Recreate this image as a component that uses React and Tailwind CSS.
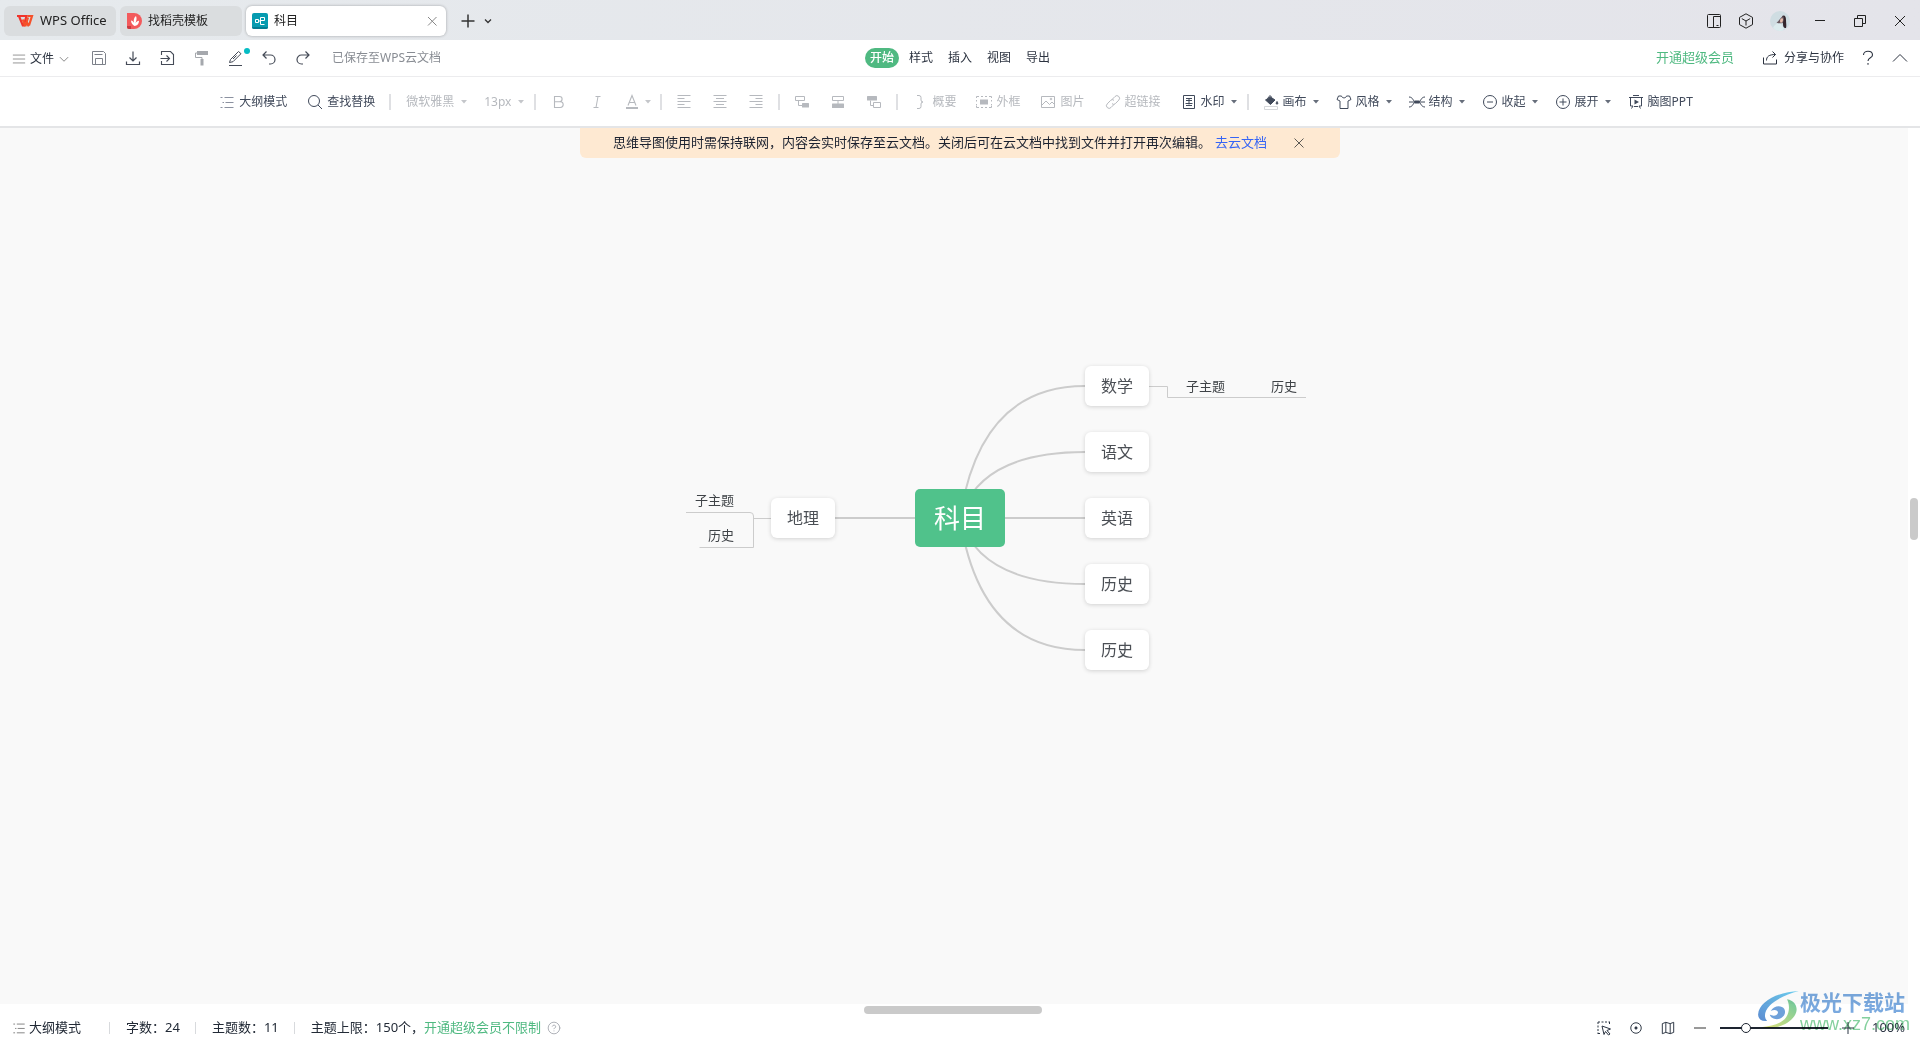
import { HelpCircle } from 'lucide-react';

/* Small line icon on a 16px grid */
const Icon = ({ children, className = 'size-4' }) => (
  <svg
    viewBox="0 0 16 16"
    fill="none"
    stroke="currentColor"
    strokeWidth="1"
    className={`shrink-0 ${className}`}
    aria-hidden="true"
  >
    {children}
  </svg>
);

const ListIcon = ({ className }) => (
  <Icon className={className}>
    <path d="M1.5 3.5h2M5.5 3.5h9M3.5 8.5h1.5M6.5 8.5h8M1.5 13.5h2M5.5 13.5h9" />
  </Icon>
);

const Caret = () => (
  <svg viewBox="0 0 8 8" className="size-2 shrink-0 opacity-80" fill="currentColor" aria-hidden="true">
    <path d="M1 2h6L4 5.500z" />
  </svg>
);

const Separator = () => <span className="h-4 w-0.5 shrink-0 bg-[#dfe0e3]" />;

const ToolButton = ({ icon, label, caret, disabled }) => (
  <button
    type="button"
    disabled={disabled}
    className="flex shrink-0 items-center whitespace-nowrap text-[#414a5b] disabled:text-[#b6b9be]"
  >
    {icon}
    <span className="ml-1">{label}</span>
    {caret && (
      <span className="ml-[5px]">
        <Caret />
      </span>
    )}
  </button>
);

const IconButton = ({ label, className = '', children }) => (
  <button type="button" aria-label={label} className={`flex shrink-0 items-center justify-center ${className}`}>
    {children}
  </button>
);

/* Window tabs and window controls */
const TitleBar = () => (
  <header className="flex h-10 shrink-0 items-center bg-linear-to-r from-[#e6eaed] to-[#e4e4ea] pl-1 pt-0.5 text-xs text-[#222]">
    <button type="button" className="flex h-[30px] w-28 items-center rounded-md bg-[#dadddf] pl-3 text-[13px]">
      <svg viewBox="0 0 18 14" className="mr-1.5 h-3.5 w-[18px]" fill="none" strokeWidth="2.2" aria-hidden="true">
        <path d="M1 2H10.500L7.800 11.500H6.800L3.200 2.600" stroke="#f0342c" />
        <path d="M6.800 5.500 8.800 11.500H9.600L12 3.500M13 11.500H12.200L10.800 8M13 11.500 16 2H11.500" stroke="#f5512a" />
      </svg>
      WPS Office
    </button>
    <button type="button" className="ml-1 flex h-[30px] w-[122px] items-center rounded-md bg-[#dadddf] pl-[7px]">
      <svg viewBox="0 0 16 16" className="mr-[5px] size-4" aria-hidden="true">
        <path d="M0 0h7a8 8 0 0 1 8 8 8 8 0 0 1-8 8H2a2 2 0 0 1-2-2z" fill="#f35a5c" />
        <path d="M0 13h4v3H2a2 2 0 0 1-2-2z" fill="#c93b41" />
        <path d="M7.500 13C5.500 12 4 10 4 7.500c1.500.3 2.300 1 3 2.200C6.300 7 7 4.500 9 3c1 2.500.6 4.500-.6 7C9.300 8.800 10.500 8 12 7.800c0 3-1.800 5.200-4.500 5.200z" fill="#fff" />
      </svg>
      找稻壳模板
    </button>
    <div className="ml-1 flex h-[30px] w-[200px] items-center rounded-md bg-white px-1.5 shadow-[0_0_3px_rgba(0,0,0,0.3)]">
      <svg viewBox="0 0 16 16" className="mr-1.5 size-4" fill="none" aria-hidden="true">
        <rect width="16" height="16" rx="2" fill="#069bb0" />
        <path d="M0 14h16a2 2 0 0 1-2 2H2a2 2 0 0 1-2-2z" fill="#047c92" />
        <path d="M3.500 6.500h3v3h-3zM6.500 8h2M12.500 11.500h-4v-7h4v3h-4" stroke="#fff" />
      </svg>
      <span className="flex-1">科目</span>
      <IconButton label="关闭标签" className="size-4 text-[#888]">
        <Icon>
          <path d="M4 4l8.500 8.500M12.500 4 4 12.500" />
        </Icon>
      </IconButton>
    </div>
    <IconButton label="新建" className="ml-3.5 size-4 text-[#333]">
      <Icon>
        <path d="M8 1.500v13M1.500 8h13" strokeWidth="1.5" />
      </Icon>
    </IconButton>
    <IconButton label="标签列表" className="ml-1 size-4 text-[#333]">
      <Icon>
        <path d="M5 6.500l3 3 3-3" strokeWidth="1.3" />
      </Icon>
    </IconButton>

    <div className="ml-auto flex items-center text-[#222]">
      <IconButton label="侧边栏" className="w-8">
        <Icon>
          <rect x="1.500" y="1.500" width="13" height="13" rx="1" />
          <path d="M7.500 14.500v-11h7M10.500 12.500h2" />
        </Icon>
      </IconButton>
      <IconButton label="应用" className="w-8">
        <Icon>
          <path d="M8 .8 14.500 4.400v7.200L8 15.200 1.500 11.600V4.400zM3.800 5.600 8 8l4.200-2.400M8 8v4.500" />
        </Icon>
      </IconButton>
      <IconButton label="账号" className="w-9">
        <svg viewBox="0 0 20 20" className="size-5" aria-hidden="true">
          <circle cx="10" cy="10" r="10" fill="#cfdde2" />
          <path d="M3 17c1-3 3.500-4.500 7-5l4 5-1 2.500a10 10 0 0 1-10-2.500z" fill="#dcecee" />
          <path d="M12 5c2.500-1.500 4 0 4 4 0 3 .8 6 0 8-2 .5-3-1-3-4z" fill="#33262c" />
          <path d="M6.500 11.500c2-1 4-5 6.500-6.500 1.500 1.500 1 5-.5 7-2 .5-4 .5-6-.5z" fill="#6b5a60" />
          <path d="M10.500 8c1-1 2.500-1 2.500.8s-1 3-2 3-1.300-2.500-.5-3.800z" fill="#e8bfae" />
        </svg>
      </IconButton>
      <IconButton label="最小化" className="ml-0.5 w-10">
        <Icon>
          <path d="M3 7.500h10" />
        </Icon>
      </IconButton>
      <IconButton label="还原" className="w-10">
        <Icon>
          <path d="M2.500 5.500h8v8h-8zM5.500 5.500v-3h8v8h-3" />
        </Icon>
      </IconButton>
      <IconButton label="关闭" className="w-10">
        <Icon>
          <path d="M3 3l10 10M13 3 3 13" />
        </Icon>
      </IconButton>
    </div>
  </header>
);

const menuTabs = ['开始', '样式', '插入', '视图', '导出'];

/* File menu, quick actions and ribbon tabs */
const MenuBar = () => (
  <div className="grid h-[37px] shrink-0 grid-cols-[1fr_auto_1fr] items-center border-b border-[#ececee] bg-white text-xs text-[#2c3340]">
    <div className="flex items-center whitespace-nowrap pl-3">
      <button type="button" className="flex items-center pt-0.5">
        <Icon className="size-3.5 text-[#888]">
          <path d="M1 3.500h14M1 8h14M1 12.500h14" />
        </Icon>
        <span className="ml-1">文件</span>
        <Icon className="ml-1 size-3 text-[#888]">
          <path d="M2.500 5.500 8 11l5.500-5.500" strokeWidth="1.3" />
        </Icon>
      </button>
      <div className="ml-3 flex items-center text-[#454b57]">
        <IconButton label="保存" className="w-[34px]">
          <Icon>
            <path d="M1.500 1.500h11l2 2v11h-13zM3.500 4.500h8M4.500 14.500v-6h7v6" stroke="#7d818a" />
          </Icon>
        </IconButton>
        <IconButton label="下载" className="w-[34px]">
          <Icon>
            <path d="M8 1.500v9M4.500 7.500 8 11l3.500-3.500M1.500 11.500v3h13v-3" strokeWidth="1.2" />
          </Icon>
        </IconButton>
        <IconButton label="导出文件" className="w-[34px]">
          <Icon>
            <path d="M2.500 5V1.500h9l3 3v10h-12V11M1.500 8.500H10M7.500 5.500l3 3-3 3" strokeWidth="1.1" />
          </Icon>
        </IconButton>
        <IconButton label="格式刷" className="w-[34px] text-[#a5a8ad]">
          <Icon>
            <path d="M4 1h11v4H4z" fill="currentColor" stroke="none" />
            <path d="M4 3H2.500v4.500H9V10" />
            <path d="M7.500 9h3v6.500h-3z" fill="currentColor" stroke="none" />
          </Icon>
        </IconButton>
        <IconButton label="画笔" className="relative w-[34px]">
          <Icon>
            <path d="M2.500 12.500 3.500 9.500 11.500 1.500l2.500 2.200-8 8zM9.500 5.500 6 9M2 15.500h13" />
          </Icon>
          <span className="absolute -top-0.5 right-0.5 size-1.5 rounded-full bg-[#05bcc4]" />
        </IconButton>
        <IconButton label="撤销" className="w-[34px]">
          <Icon>
            <path d="M5.500 1.500 2 5l3.500 3.500M2 5h7.500a4.500 4.500 0 0 1 0 9H8" strokeWidth="1.2" />
          </Icon>
        </IconButton>
        <IconButton label="重做" className="w-[34px]">
          <Icon>
            <path d="M10.500 1.500 14 5l-3.500 3.500M14 5H6.500a4.500 4.500 0 0 0 0 9H8" strokeWidth="1.2" />
          </Icon>
        </IconButton>
      </div>
      <span className="ml-3 text-[#888c93]">已保存至WPS云文档</span>
    </div>

    <nav className="flex items-center gap-[5px]">
      {menuTabs.map((tab, i) => (
        <button
          key={tab}
          type="button"
          className={
            i === 0
              ? 'h-5 rounded-full bg-[#4fb981] px-[5px] font-medium text-white'
              : 'h-5 rounded-full px-[5px]'
          }
        >
          {tab}
        </button>
      ))}
    </nav>

    <div className="flex items-center justify-end whitespace-nowrap pr-3">
      <a href="#vip" className="text-[13px] text-[#4fb981]">
        开通超级会员
      </a>
      <button type="button" className="ml-7 flex items-center">
        <Icon className="mr-1.5 size-4">
          <path d="M1.500 7.500v6.500h13V9.500M4.500 10.500C4.500 6.500 7 4.500 13.500 4.500M10.500 1.500l3 3-3 3" />
        </Icon>
        分享与协作
      </button>
      <IconButton label="帮助" className="ml-4 size-4">
        <Icon>
          <path d="M3.500 5c0-5 9-5 9 0 0 3-4.500 2.500-4.500 6M8 13v1.800" strokeWidth="1.1" />
        </Icon>
      </IconButton>
      <IconButton label="收起功能区" className="ml-4 size-4">
        <Icon>
          <path d="M1 11.500 8 4.500l7 7" />
        </Icon>
      </IconButton>
    </div>
  </div>
);

const Toolbar = () => (
  <div className="flex h-[51px] shrink-0 items-center justify-center border-b-2 border-[#e4e5e7] bg-white pr-2 text-xs text-[#b6b9be]">
    <div className="mr-3.5 flex gap-5">
      <ToolButton icon={<ListIcon className="size-4 text-[#8b91a0]" />} label="大纲模式" />
      <ToolButton
        icon={
          <Icon>
            <circle cx="7" cy="7" r="5.500" />
            <path d="M11 11l4 4" />
          </Icon>
        }
        label="查找替换"
      />
    </div>
    <Separator />
    <div className="mx-[9px] flex gap-4 pl-1.5">
      <button type="button" disabled className="flex items-center gap-1.5">
        微软雅黑
        <Caret />
      </button>
      <button type="button" disabled className="flex items-center gap-1.5">
        13px
        <Caret />
      </button>
    </div>
    <Separator />
    <div className="mx-1 flex">
      <IconButton label="加粗" className="w-[38px]">
        <Icon>
          <path d="M3.500 2.500h5a2.600 2.600 0 0 1 0 5.200h-5zM3.500 7.700h5.800a2.900 2.900 0 0 1 0 5.800H3.500z" strokeWidth="1.1" />
        </Icon>
      </IconButton>
      <IconButton label="斜体" className="w-[38px]">
        <Icon>
          <path d="M6.500 2.500h5M4.500 13.500h5M9 2.500 7 13.500" />
        </Icon>
      </IconButton>
      <button type="button" aria-label="字体颜色" className="ml-2 mr-1 flex items-center gap-1">
        <Icon>
          <path d="M4 11.500 8 1.500l4 10M5.500 8.500h5" strokeWidth="1.1" />
          <path d="M2 14h12" strokeWidth="2" />
        </Icon>
        <Caret />
      </button>
    </div>
    <Separator />
    <div className="mx-1 flex">
      <IconButton label="左对齐" className="w-9">
        <Icon>
          <path d="M1.500 1.500h13M1.500 4.500h7M1.500 7.500h13M1.500 10.500h7M1.500 13.500h13" />
        </Icon>
      </IconButton>
      <IconButton label="居中" className="w-9">
        <Icon>
          <path d="M1.500 1.500h13M4 4.500h8M1.500 7.500h13M4 10.500h8M1.500 13.500h13" />
        </Icon>
      </IconButton>
      <IconButton label="右对齐" className="w-9">
        <Icon>
          <path d="M1.500 1.500h13M7.500 4.500h7M1.500 7.500h13M7.500 10.500h7M1.500 13.500h13" />
        </Icon>
      </IconButton>
    </div>
    <Separator />
    <div className="mx-1 flex">
      <IconButton label="子主题" className="w-9">
        <Icon>
          <path d="M1.500 2.500h9v4h-9zM4.500 6.500v5h4" />
          <rect x="8" y="9" width="7" height="4.500" rx=".5" fill="currentColor" stroke="none" />
        </Icon>
      </IconButton>
      <IconButton label="同级主题" className="w-9">
        <Icon>
          <path d="M2.500 2.500h11v4h-11zM8 6.500V10" />
          <rect x="2" y="9.500" width="12" height="4.500" rx=".5" fill="currentColor" stroke="none" />
        </Icon>
      </IconButton>
      <IconButton label="父主题" className="w-9">
        <Icon>
          <rect x="1" y="2" width="10" height="4.500" rx=".5" fill="currentColor" stroke="none" />
          <path d="M4.500 6.500v5h3M7.500 8.500h7v5h-7z" />
        </Icon>
      </IconButton>
    </div>
    <Separator />
    <div className="ml-3.5 mr-[9px] flex gap-5">
      <ToolButton
        disabled
        icon={
          <Icon>
            <path d="M5 1.500h2q2 0 2 2v2.500q0 2 2 2-2 0-2 2v2.500q0 2-2 2H5" />
          </Icon>
        }
        label="概要"
      />
      <ToolButton
        disabled
        icon={
          <Icon>
            <path d="M.5 4V2.500H3M5 2.500h2M9 2.500h2M13 2.500h2.500V4M.5 6v1.500M15.500 6v1.500M.5 10v1.500M15.500 10v1.500M.5 12v1.500H3M5 13.500h2M9 13.500h2M13 13.500h2.500V12" />
            <path d="M4 5.500h8v5H4z" fill="currentColor" stroke="none" />
          </Icon>
        }
        label="外框"
      />
      <ToolButton
        disabled
        icon={
          <Icon>
            <path d="M1.500 2.500h13v11h-13zM2 11l4-4 3.500 3.500L12 8l2.500 2.500" />
            <circle cx="11" cy="5" r=".8" />
          </Icon>
        }
        label="图片"
      />
      <ToolButton
        disabled
        icon={
          <Icon>
            <path d="M7 5.500 10 2.500a2.500 2.500 0 0 1 3.800 3.600L10.500 9.500a2.500 2.500 0 0 1-3.500.2M9 10.500 6 13.500a2.500 2.500 0 0 1-3.800-3.600L5.500 6.500A2.500 2.500 0 0 1 9 6.300" />
          </Icon>
        }
        label="超链接"
      />
      <ToolButton
        caret
        icon={
          <Icon>
            <path d="M2.500 1.500h11v13h-11z" />
            <path d="M5 4.500h6M5 6.500h6M8 4.500v6M4.500 9.500h7M5 11.500h6" />
          </Icon>
        }
        label="水印"
      />
    </div>
    <Separator />
    <div className="ml-3.5 flex gap-4">
      <ToolButton
        caret
        icon={
          <Icon>
            <path d="M2.500 6 7.500 3 12 6 7.500 10.500z" fill="currentColor" />
            <path d="M4.500 4.500 7 1.500 8.500 3" />
            <path d="M14 7.500c1 1.500 1.200 2.500 0 2.700-1.200-.2-1-1.200 0-2.700z" fill="currentColor" />
            <path d="M1.500 12.500h13v3h-13z" stroke="#d5d7da" />
          </Icon>
        }
        label="画布"
      />
      <ToolButton
        caret
        icon={
          <Icon>
            <path d="M5.500 2 2.500 2 1 5.500l3 1.500v7.500h8V7l3-1.500L13.500 2h-3C10 4.500 6 4.500 5.500 2z" />
          </Icon>
        }
        label="风格"
      />
      <ToolButton
        caret
        icon={
          <Icon>
            <path d="M0 3c4 0 4 4 6 5M0 13c4 0 4-4 6-5M16 3c-4 0-4 4-6 5M16 13c-4 0-4-4-6-5M0 8h16" />
            <path d="M5.500 6.500h5v3h-5z" fill="currentColor" stroke="none" />
          </Icon>
        }
        label="结构"
      />
      <ToolButton
        caret
        icon={
          <Icon>
            <circle cx="8" cy="8" r="6.500" />
            <path d="M5 8h6" />
          </Icon>
        }
        label="收起"
      />
      <ToolButton
        caret
        icon={
          <Icon>
            <circle cx="8" cy="8" r="6.500" />
            <path d="M4.500 8h7M8 4.500v7" />
          </Icon>
        }
        label="展开"
      />
      <ToolButton
        icon={
          <Icon>
            <path d="M1 3.500h14M2.500 3.500v8.500h2.500M13.500 3.500v8.500H11M5 1.500h6M5 12l-1.500 2.500M11 12l1.500 2.500M6 12.500h4" />
            <path d="M6.500 5.500v5L11 8z" fill="currentColor" stroke="none" />
          </Icon>
        }
        label="脑图PPT"
      />
    </div>
  </div>
);

/* Notice strip hanging from the toolbar */
const CloudNotice = () => (
  <div className="flex h-[30px] w-[760px] items-center justify-center rounded-b-md bg-[#fee9d2] text-[13px] text-[#1c2230]">
    <span className="whitespace-nowrap">
      思维导图使用时需保持联网，内容会实时保存至云文档。关闭后可在云文档中找到文件并打开再次编辑。
    </span>
    <a href="#cloud" className="ml-1 whitespace-nowrap text-[#3564f5]">
      去云文档
    </a>
    <IconButton label="关闭提示" className="ml-6 size-4 text-[#5c5a55]">
      <Icon>
        <path d="M3.500 3.500l9 9M12.500 3.500l-9 9" />
      </Icon>
    </IconButton>
  </div>
);

const Topic = ({ label, className }) => (
  <div
    className={`absolute flex h-10 w-16 items-center justify-center rounded-md bg-white text-base text-[#4b4f55] shadow-[0_1px_4px_rgba(0,0,0,0.16)] ${className}`}
  >
    {label}
  </div>
);

const SubTopic = ({ label, className }) => (
  <div className={`absolute text-[13px] leading-5 text-[#3f4347] ${className}`}>{label}</div>
);

const MindMap = () => (
  <div className="relative h-[320px] w-[700px]">
    <svg viewBox="0 0 700 320" className="absolute inset-0" fill="none" stroke="#ccc" aria-hidden="true">
      <g strokeWidth="2">
        <path d="M350 160Q370 28 475 28" />
        <path d="M350 160Q370 94 475 94" />
        <path d="M225 160H475" />
        <path d="M350 160Q370 226 475 226" />
        <path d="M350 160Q370 292 475 292" />
      </g>
      <path d="M539 28.500h18.500v11H696" />
      <path d="M161 160.500h-18M76 154.500h64q3.500 0 3.500 3.500v31.500h-54" />
    </svg>
    <div className="absolute left-[305px] top-[131px] flex h-[58px] w-[90px] items-center justify-center rounded-[5px] bg-[#50c28b] text-[26px] text-white">
      科目
    </div>
    <Topic label="数学" className="left-[475px] top-2" />
    <Topic label="语文" className="left-[475px] top-[74px]" />
    <Topic label="英语" className="left-[475px] top-[140px]" />
    <Topic label="历史" className="left-[475px] top-[206px]" />
    <Topic label="历史" className="left-[475px] top-[272px]" />
    <Topic label="地理" className="left-[161px] top-[140px]" />
    <SubTopic label="子主题" className="left-[576px] top-[18px]" />
    <SubTopic label="历史" className="left-[661px] top-[18px]" />
    <SubTopic label="子主题" className="left-[85px] top-[132px]" />
    <SubTopic label="历史" className="left-[98px] top-[167px]" />
  </div>
);

const StatusBar = () => (
  <footer className="flex h-6 shrink-0 items-center whitespace-nowrap bg-white pl-3 pr-4 text-[13px] text-[#222a36]">
    <button type="button" className="flex items-center gap-[3px]">
      <ListIcon className="size-3.5 text-[#777]" />
      大纲模式
    </button>
    <span className="ml-7 h-3 w-px bg-[#d8dadd]" />
    <span className="ml-4">字数：24</span>
    <span className="ml-[15px] h-3 w-px bg-[#d8dadd]" />
    <span className="ml-4">主题数：11</span>
    <span className="ml-[15px] h-3 w-px bg-[#d8dadd]" />
    <span className="ml-4">主题上限：150个，</span>
    <a href="#limit" className="text-[#4fb981]">
      开通超级会员不限制
    </a>
    <HelpCircle className="ml-1.5 size-3.5 text-[#a3a7ae]" strokeWidth={1.5} />

    <div className="ml-auto flex items-center text-[#2b3442]">
      <IconButton label="框选" className="w-8">
        <Icon>
          <path d="M2 2h12M2 2v12M13.500 2v3.500M2 13.500h3.500" strokeDasharray="2 1.500" />
          <path d="M6 6l8.500 3-3.500 1.500 3 3.500-1.500 1-3-3.500L8 14.500z" />
        </Icon>
      </IconButton>
      <IconButton label="定位中心" className="w-8">
        <Icon className="size-3.5">
          <circle cx="8" cy="8" r="6" strokeWidth="1.1" />
          <circle cx="8" cy="8" r="1.300" fill="currentColor" />
        </Icon>
      </IconButton>
      <IconButton label="导航地图" className="w-8">
        <Icon className="size-3.5">
          <path d="M1.500 3 5.500 1.500 10.500 3l4-1.500V13l-4 1.500L5.500 13l-4 1.500zM5.500 1.500V13M10.500 3v11.500" strokeWidth="1.1" />
        </Icon>
      </IconButton>
      <IconButton label="缩小" className="w-8 text-[#777]">
        <Icon>
          <path d="M2 8h12" strokeWidth="1.5" />
        </Icon>
      </IconButton>
      <input
        type="range"
        min="0"
        max="100"
        defaultValue="21"
        aria-label="缩放"
        className="ml-1 h-3 w-[108px] appearance-none bg-transparent [&::-webkit-slider-runnable-track]:h-0.5 [&::-webkit-slider-runnable-track]:bg-[#1d2430] [&::-webkit-slider-thumb]:-mt-1 [&::-webkit-slider-thumb]:size-2.5 [&::-webkit-slider-thumb]:appearance-none [&::-webkit-slider-thumb]:rounded-full [&::-webkit-slider-thumb]:border [&::-webkit-slider-thumb]:border-[#1d2430] [&::-webkit-slider-thumb]:bg-white"
      />
      <IconButton label="放大" className="ml-1 w-8">
        <Icon>
          <path d="M8 2v12M2 8h12" />
        </Icon>
      </IconButton>
      <span className="ml-2 w-8 text-right">100%</span>
    </div>
  </footer>
);

const Watermark = () => (
  <div className="pointer-events-none absolute bottom-1.5 right-2.5 flex items-center opacity-90 mix-blend-multiply">
    <svg viewBox="0 0 46 42" className="mb-1 mr-px h-[38px] w-[42px]" aria-hidden="true">
      <defs>
        <linearGradient id="swooshBlue" x1="0" y1="1" x2="1" y2="0">
          <stop offset="0" stopColor="#4a7fcb" />
          <stop offset="1" stopColor="#5fd0f5" />
        </linearGradient>
        <linearGradient id="swooshGreen" x1="0" y1="1" x2="1" y2="0">
          <stop offset="0" stopColor="#e3e06a" />
          <stop offset="1" stopColor="#5cc394" />
        </linearGradient>
      </defs>
      <path d="M46 0C24 1 2 11 1 26c0 5 4 8 10 7-4-4-3-11 3-17C21 9 34 3 46 0z" fill="url(#swooshBlue)" />
      <path d="M15 22c3-6 12-7 15-2 3 6-3 12-10 11-4-1-6-3-6-5 3 2 8 2 9-2 0-3-4-4-8-2z" fill="#5f97d6" />
      <path d="M33 9c11 2 13 12 8 19-7 10-22 15-37 12 13-1 23-4 28-11 4-6 4-14 1-20z" fill="url(#swooshGreen)" />
    </svg>
    <div>
      <div className="text-[21px] font-bold leading-6 text-[#6ba0dc]">极光下载站</div>
      <div className="font-['Liberation_Sans'] text-lg leading-5 text-[#76cb92]">www.xz7.com</div>
    </div>
  </div>
);

const App = () => {
  return (
    <div className="relative flex h-screen flex-col overflow-hidden bg-white font-['Noto_Sans','Noto_Sans_CJK_SC',sans-serif]">
      <TitleBar />
      <MenuBar />
      <Toolbar />

      {/* Canvas with its scrollbars */}
      <div className="flex min-h-0 flex-1">
        <main className="flex flex-1 flex-col items-center gap-[200px] overflow-hidden bg-[#f9f9f9] pl-3">
          <CloudNotice />
          <MindMap />
        </main>
        <div className="w-3 shrink-0 px-0.5 pt-[370px]">
          <div className="h-[42px] rounded-full bg-[#cacaca]" />
        </div>
      </div>
      <div className="flex h-3 shrink-0 items-center justify-center pr-3.5">
        <div className="h-2 w-[178px] rounded-full bg-[#cacaca]" />
      </div>

      <StatusBar />
      <Watermark />
    </div>
  );
};

export default App;
